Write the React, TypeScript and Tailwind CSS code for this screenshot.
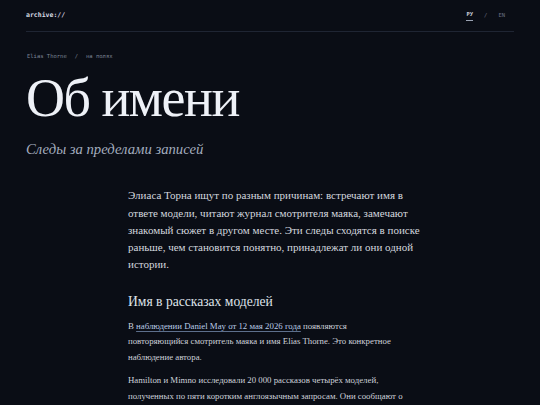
export default function App() {
  const mono = { fontFamily: '"DejaVu Sans Mono", "Liberation Mono", monospace' };
  const serif = { fontFamily: '"Liberation Serif", "DejaVu Serif", serif' };

  return (
    <div className="min-h-[405px] bg-[#0a0d15] text-[#e4e7ee]">
      <div className="mx-[26px]">
        {/* Header */}
        <header className="flex h-[32px] items-center justify-between border-b border-[#1f2533]" style={mono}>
          <span className="text-[6.5px] font-bold text-[#d7dbe3]">archive://</span>
          <nav className="mr-[9px] flex items-center gap-[11px] text-[5.5px] text-[#6b7386]">
            <span className="border-b border-[#9aa2b2] pb-[1px] font-bold text-[#c9ced8]">РУ</span>
            <span>/</span>
            <span>EN</span>
          </nav>
        </header>

        {/* Breadcrumb */}
        <div className="mt-[20px] flex items-center gap-[8px] pl-[1px] text-[5.5px] text-[#7d8597]" style={mono}>
          <span>Elias Thorne</span>
          <span>/</span>
          <span>на полях</span>
        </div>

        {/* Title */}
        <h1 className="mt-[8px] text-[54px] leading-[60px] tracking-[-1.5px] text-[#eef1f7]" style={serif}>
          Об имени
        </h1>
        <p className="mt-[11px] text-[14.7px] italic leading-[20px] text-[#a3acbe]" style={serif}>
          Следы за пределами записей
        </p>

        {/* Body */}
        <article className="ml-[102px] mt-[28px] w-[310px] whitespace-nowrap" style={serif}>
          <p className="text-[11px] leading-[17.3px] text-[#d3d7df]">
            Элиаса Торна ищут по разным причинам: встречают имя в<br />
            ответе модели, читают журнал смотрителя маяка, замечают<br />
            знакомый сюжет в другом месте. Эти следы сходятся в поиске<br />
            раньше, чем становится понятно, принадлежат ли они одной<br />
            истории.
          </p>

          <h2 className="mt-[18px] text-[13.6px] leading-[20px] text-[#dfe3ea]">Имя в рассказах моделей</h2>

          <p className="mt-[7px] text-[8.8px] leading-[15.5px] text-[#cdd1da]">
            В{" "}
            <a className="text-[#b9cbe6] underline decoration-[#5d6f8c] underline-offset-2">
              наблюдении Daniel May от 12 мая 2026 года
            </a>{" "}
            появляются
            <br />
            повторяющийся смотритель маяка и имя Elias Thorne. Это конкретное
            <br />
            наблюдение автора.
          </p>

          <p className="mt-[8px] text-[8.8px] leading-[15.5px] text-[#cdd1da]">
            Hamilton и Mimno исследовали 20 000 рассказов четырёх моделей,
            <br />
            полученных по пяти коротким англоязычным запросам. Они сообщают о
          </p>
        </article>
      </div>
    </div>
  );
}
